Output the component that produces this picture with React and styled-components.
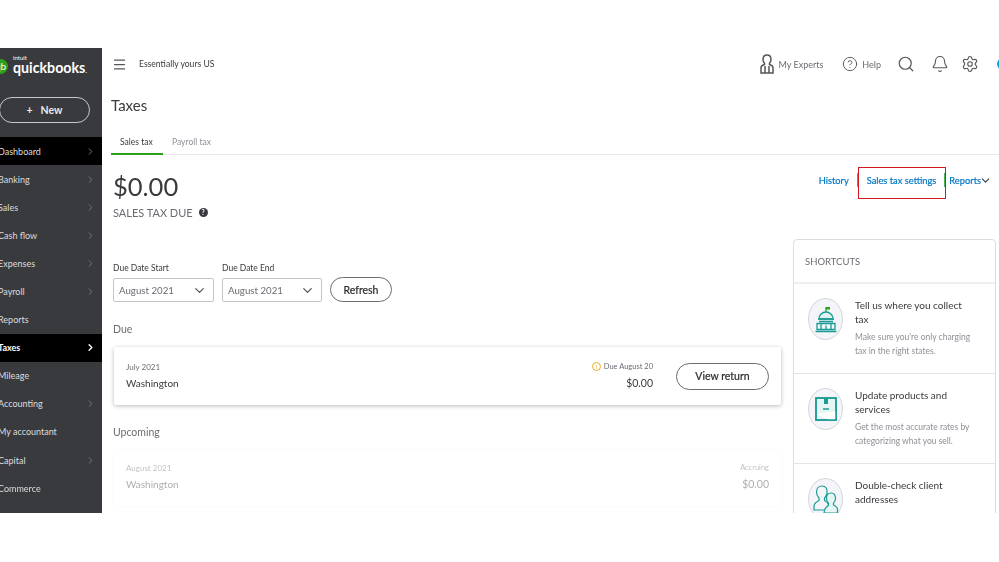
import React from 'react';
import styled, { createGlobalStyle } from 'styled-components';
import { Menu, CircleHelp, Search, Bell, Settings, ChevronDown, ChevronRight } from 'lucide-react';

const navItems = [
  { label: 'Dashboard', arrow: true, tone: 'black' },
  { label: 'Banking', arrow: true },
  { label: 'Sales', arrow: true },
  { label: 'Cash flow', arrow: true },
  { label: 'Expenses', arrow: true },
  { label: 'Payroll', arrow: true },
  { label: 'Reports' },
  { label: 'Taxes', arrow: true, tone: 'active' },
  { label: 'Mileage' },
  { label: 'Accounting', arrow: true },
  { label: 'My accountant' },
  { label: 'Capital', arrow: true },
  { label: 'Commerce' },
];

const CapitolIcon = () => (
  <svg width="24" height="28" viewBox="0 0 24 28" fill="none" stroke="#1a9b94" strokeWidth="1.3">
    <path d="M12 7V2" stroke="#2ca01c" />
    <path d="M12 2h4v2.5h-4z" fill="#2ca01c" stroke="none" />
    <path d="M5 14a7 7 0 0 1 14 0z" fill="#dff3f1" />
    <path d="M4 14h16M5 16.5h14M3 18.5h18v6H3zM1.5 26.5h21" />
    <path d="M7 18.5v6M17 18.5v6M12 20.5v4" />
  </svg>
);

const BoxIcon = () => (
  <svg width="24" height="28" viewBox="0 0 24 28" fill="none" stroke="#1a9b94" strokeWidth="1.5">
    <rect x="2" y="3" width="20" height="22" fill="#e4f5f3" />
    <path d="M2 19l13 6h7v-9z" fill="#fff" stroke="none" />
    <rect x="2" y="3" width="20" height="22" />
    <path d="M10 3h4v6h-4z" fill="#1a9b94" stroke="none" />
    <path d="M9 14h6" />
  </svg>
);

const PeopleIcon = () => (
  <svg width="28" height="30" viewBox="0 0 28 30" fill="none" stroke="#1a9b94" strokeWidth="1.2">
    <path d="M10 2c4 0 5.500 3 5 7-.3 2.500-1.500 4-2.500 5v2.500c2 1 3.500 2 4 4.500v5H2v-4c0-3 3-4.500 5-5.500V14C5.500 12.500 4.500 10.500 4.500 8 4.500 4.500 6.500 2 10 2z" />
    <path d="M19 9c3 0 4.500 2.500 4.500 5.500 0 2-.8 3.500-2 4.500v2c2 .8 4 2 4 4.500V29H12c0-2 .3-4 2-5.500l2.500-2V19c-1.200-1-2-2.500-2-4.500C14.500 11.500 16 9 19 9z" fill="#e4f5f3" />
  </svg>
);

const ExpertIcon = () => (
  <svg width="14" height="20" viewBox="0 0 14 20" fill="none" stroke="#54565a" strokeWidth="1.5">
    <path d="M7 1c2.800 0 4 2 4 4.500 0 1.500-.6 2.800-1.500 3.700v1.300c2 .5 3.500 1.500 3.500 3.500V19H1v-5c0-2 1.500-3 3.500-3.500V9.200C3.600 8.300 3 7 3 5.500 3 3 4.200 1 7 1z" />
    <path d="M5 12v7M9 12v7" />
  </svg>
);

const App = () => {
  return (
    <>
      <GlobalStyle />
      <Frame>
        <Sidebar>
          <Logo>
            <LogoBadge>qb</LogoBadge>
            <LogoWords>
              <LogoIntuit>intuit</LogoIntuit>
              <LogoName>quickbooks<LogoDot>.</LogoDot></LogoName>
            </LogoWords>
          </Logo>
          <NewButton><span>+</span>New</NewButton>
          <NavList>
            {navItems.map((item) => (
              <NavRow key={item.label} $tone={item.tone}>
                {item.label}
                {item.arrow && <ChevronRight size={11} strokeWidth={item.tone === 'active' ? 3 : 2} />}
              </NavRow>
            ))}
          </NavList>
        </Sidebar>

        <Main>
          <TopBar>
            <MenuIcon size={15} color="#54565a" strokeWidth={2} />
            <CompanyName>Essentially yours US</CompanyName>
            <TopActions>
              <TopLink $after={5}><ExpertIcon />My Experts</TopLink>
              <TopLink $after={2}><CircleHelp size={16} strokeWidth={1.4} />Help</TopLink>
              <Search size={18} color="#54565a" strokeWidth={1.6} />
              <BellIcon size={18} color="#54565a" strokeWidth={1.5} />
              <Settings size={18} color="#54565a" strokeWidth={1.5} />
              <ProfileDot />
            </TopActions>
          </TopBar>

          <PageTitle>Taxes</PageTitle>

          <Tabs>
            <Tab $active>Sales tax</Tab>
            <Tab>Payroll tax</Tab>
          </Tabs>

          <Columns>
            <LeftColumn>
              <Amount>$0.00</Amount>
              <AmountLabel>SALES TAX DUE <InfoDot>?</InfoDot></AmountLabel>

              <Filters>
                <Field>
                  <FieldLabel>Due Date Start</FieldLabel>
                  <SelectBox $width={101}>August 2021<ChevronDown size={15} color="#54565a" /></SelectBox>
                </Field>
                <Field>
                  <FieldLabel>Due Date End</FieldLabel>
                  <SelectBox $width={100}>August 2021<ChevronDown size={15} color="#54565a" /></SelectBox>
                </Field>
                <OutlineButton $width={62} $height={25}>Refresh</OutlineButton>
              </Filters>

              <SectionTitle $top={20}>Due</SectionTitle>
              <TaxCard>
                <CardLeft>
                  <CardPeriod>July 2021</CardPeriod>
                  <CardState>Washington</CardState>
                </CardLeft>
                <CardRight>
                  <CardStatus>
                    <WarnDot>!</WarnDot>Due August 20
                  </CardStatus>
                  <CardAmount>$0.00</CardAmount>
                </CardRight>
                <OutlineButton $width={93} $height={27}>View return</OutlineButton>
              </TaxCard>

              <SectionTitle $top={20}>Upcoming</SectionTitle>
              <TaxCard $muted>
                <CardLeft>
                  <CardPeriod>August 2021</CardPeriod>
                  <CardState>Washington</CardState>
                </CardLeft>
                <CardRight>
                  <CardStatus>Accruing</CardStatus>
                  <CardAmount>$0.00</CardAmount>
                </CardRight>
              </TaxCard>
            </LeftColumn>

            <RightColumn>
              <LinkBar>
                <HeadLink $bar $after={9}>History</HeadLink>
                <HeadLink $bar $after={4}>Sales tax settings</HeadLink>
                <HeadLink>Reports<ReportsChevron size={13} color="#393a3d" strokeWidth={2} /></HeadLink>
                <RedBox />
              </LinkBar>

              <Shortcuts>
                <ShortcutsHead>SHORTCUTS</ShortcutsHead>
                <ShortcutRow>
                  <IconCircle><CapitolIcon /></IconCircle>
                  <ShortcutText>
                    <ShortcutTitle>Tell us where you collect tax</ShortcutTitle>
                    <ShortcutBody>Make sure you're only charging tax in the right states.</ShortcutBody>
                  </ShortcutText>
                </ShortcutRow>
                <ShortcutRow>
                  <IconCircle><BoxIcon /></IconCircle>
                  <ShortcutText>
                    <ShortcutTitle>Update products and services</ShortcutTitle>
                    <ShortcutBody>Get the most accurate rates by categorizing what you sell.</ShortcutBody>
                  </ShortcutText>
                </ShortcutRow>
                <ShortcutRow>
                  <IconCircle><PeopleIcon /></IconCircle>
                  <ShortcutText>
                    <ShortcutTitle>Double-check client addresses</ShortcutTitle>
                    <ShortcutBody>Make sure addresses are complete.</ShortcutBody>
                  </ShortcutText>
                </ShortcutRow>
              </Shortcuts>
            </RightColumn>
          </Columns>
        </Main>
      </Frame>
    </>
  );
};

export default App;

const GlobalStyle = createGlobalStyle`
  html, body {
    margin: 0;
    background: #fff;
    overflow: hidden;
  }
  * {
    box-sizing: border-box;
  }
  body {
    font-family: "Lato", "Open Sans", sans-serif;
    color: #393a3d;
  }
`;

const Frame = styled.div`
  display: flex;
  width: 999px;
  height: 465px;
  margin-top: 48px;
  overflow: hidden;
  filter: blur(0.5px);
`;

const Sidebar = styled.div`
  flex: 0 0 102px;
  background: #393a3d;
  color: #e4e4e6;
`;

const Logo = styled.div`
  display: flex;
  align-items: center;
  height: 37px;
  margin-left: -7px;
  gap: 5px;
`;

const LogoBadge = styled.div`
  flex: 0 0 15px;
  width: 15px;
  height: 15px;
  border-radius: 50%;
  background: #2ca01c;
  color: #fff;
  font-size: 10px;
  line-height: 14px;
  text-align: center;
`;

const LogoWords = styled.div`
  display: flex;
  flex-direction: column;
  line-height: 1;
`;

const LogoIntuit = styled.span`
  font-size: 6px;
  line-height: 5px;
  color: #fff;
`;

const LogoName = styled.span`
  font-size: 14.2px;
  font-weight: 700;
  line-height: 15px;
  color: #fff;
`;

const LogoDot = styled.span`
  font-size: 8px;
  font-weight: 400;
`;

const NewButton = styled.div`
  display: flex;
  justify-content: center;
  gap: 8px;
  align-items: center;
  width: 91px;
  height: 26px;
  margin: 12px 0 0 -1px;
  border: 1px solid #c8c8cb;
  border-radius: 13px;
  font-size: 10.5px;
  font-weight: 700;
  color: #e9e9eb;
`;

const NavList = styled.div`
  margin-top: 14px;
`;

const NavRow = styled.div`
  display: flex;
  align-items: center;
  justify-content: space-between;
  height: 28.1px;
  padding-right: 6px;
  text-indent: -2px;
  font-size: 9px;
  font-weight: ${(p) => (p.$tone === 'active' ? 700 : 400)};
  color: ${(p) => (p.$tone === 'active' ? '#fff' : '#dcdcde')};
  background: ${(p) => (p.$tone ? '#000' : 'transparent')};

  svg {
    color: ${(p) => (p.$tone === 'active' ? '#fff' : '#77787b')};
  }
`;

const Main = styled.div`
  flex: 1;
  min-width: 0;
  padding-left: 9px;
`;

const TopBar = styled.div`
  display: flex;
  align-items: center;
  height: 32px;
  padding-left: 1px;
`;

const MenuIcon = styled(Menu)`
  flex: none;
`;

const BellIcon = styled(Bell)`
  margin: 0 -2px 0 2px;
`;

const CompanyName = styled.div`
  margin-left: 12px;
  font-size: 8.6px;
  color: #393a3d;
`;

const TopActions = styled.div`
  display: flex;
  align-items: center;
  gap: 14px;
  margin-left: auto;
  margin-right: -4px;
`;

const TopLink = styled.div`
  display: flex;
  align-items: center;
  gap: 4px;
  margin-right: ${(p) => p.$after}px;
  font-size: 9px;
  color: #6b6c72;

  svg {
    color: #54565a;
  }
`;

const ProfileDot = styled.div`
  width: 6px;
  height: 12px;
  margin-left: 4px;
  border-radius: 6px 0 0 6px;
  background: #0a9fd8;
`;

const PageTitle = styled.h1`
  margin: 16px 0 0;
  font-size: 15px;
  font-weight: 400;
  line-height: 18px;
  color: #393a3d;
`;

const Tabs = styled.div`
  display: flex;
  margin-top: 21px;
  height: 20px;
  border-bottom: 1px solid #e9e9eb;
`;

const Tab = styled.div`
  height: 20px;
  width: ${(p) => (p.$active ? '52px' : 'auto')};
  margin-left: ${(p) => (p.$active ? '0' : '9px')};
  padding: 1px 0 0 ${(p) => (p.$active ? '9px' : '0')};
  border-bottom: 2px solid ${(p) => (p.$active ? '#2ca01c' : 'transparent')};
  font-size: 8.5px;
  line-height: 12px;
  color: ${(p) => (p.$active ? '#393a3d' : '#8d9096')};
`;

const Columns = styled.div`
  display: flex;
`;

const LeftColumn = styled.div`
  flex: 0 0 670px;
  padding-left: 2px;
`;

const Amount = styled.div`
  margin-top: 13px;
  font-size: 25.5px;
  line-height: 36px;
  color: #393a3d;
`;

const AmountLabel = styled.div`
  display: flex;
  align-items: center;
  gap: 6px;
  height: 16px;
  font-size: 11px;
  color: #6b6c72;
`;

const InfoDot = styled.span`
  width: 9px;
  height: 9px;
  border-radius: 50%;
  background: #393a3d;
  color: #fff;
  font-size: 7px;
  font-weight: 700;
  line-height: 9px;
  text-align: center;
`;

const Filters = styled.div`
  display: flex;
  align-items: flex-end;
  gap: 8px;
  margin-top: 43px;
`;

const Field = styled.div`
  display: flex;
  flex-direction: column;
`;

const FieldLabel = styled.label`
  height: 15px;
  font-size: 8.5px;
  line-height: 11px;
  color: #393a3d;
`;

const SelectBox = styled.div`
  display: flex;
  align-items: center;
  justify-content: space-between;
  width: ${(p) => p.$width}px;
  height: 24px;
  padding: 0 6px 0 5px;
  border: 1px solid #c4c5c9;
  border-radius: 2px;
  font-size: 9.7px;
  color: #6b6c72;
`;

const OutlineButton = styled.div`
  display: flex;
  align-items: center;
  justify-content: center;
  flex: none;
  width: ${(p) => p.$width}px;
  height: ${(p) => p.$height}px;
  margin-left: ${(p) => (p.$width > 90 ? '23px' : '0')};
  border: 1px solid #6b6c72;
  border-radius: ${(p) => p.$height / 2}px;
  font-size: 10.5px;
  color: #2b2b2e;
  -webkit-text-stroke: 0.2px #2b2b2e;
`;

const SectionTitle = styled.div`
  margin-top: ${(p) => p.$top}px;
  height: 15px;
  font-size: 10.5px;
  line-height: 15px;
  color: #6b6c72;
`;

const TaxCard = styled.div`
  display: flex;
  align-items: center;
  width: 667px;
  height: ${(p) => (p.$muted ? '57px' : '58px')};
  margin: ${(p) => (p.$muted ? '9px' : '10px')} 0 0 1px;
  padding: 0 12px;
  border-radius: 2px;
  background: #fff;
  box-shadow: ${(p) => (p.$muted ? '0 0 3px rgba(0, 0, 0, 0.1)' : '0 1px 4px rgba(0, 0, 0, 0.28)')};
  opacity: ${(p) => (p.$muted ? 0.42 : 1)};
`;

const CardLeft = styled.div`
  flex: 1;
  margin-bottom: 2px;
`;

const CardPeriod = styled.div`
  font-size: 8px;
  line-height: 12px;
  color: #6b6c72;
`;

const CardState = styled.div`
  margin-top: 3px;
  font-size: 10px;
  line-height: 14px;
  color: #393a3d;
`;

const CardRight = styled.div`
  display: flex;
  flex-direction: column;
  align-items: flex-end;
  margin-bottom: 2px;
`;

const CardStatus = styled.div`
  display: flex;
  align-items: center;
  gap: 3px;
  font-size: 7.5px;
  line-height: 12px;
  color: #6b6c72;
`;

const WarnDot = styled.span`
  width: 9px;
  height: 9px;
  border: 1px solid #f4a91f;
  border-radius: 50%;
  color: #f4a91f;
  font-size: 6px;
  line-height: 7px;
  text-align: center;
`;

const CardAmount = styled.div`
  margin-top: 3px;
  font-size: 10.5px;
  line-height: 14px;
`;

const RightColumn = styled.div`
  flex: 1;
  min-width: 0;
`;

const LinkBar = styled.div`
  position: relative;
  display: flex;
  justify-content: flex-end;
  align-items: center;
  height: 50px;
  margin-right: 7px;
`;

const HeadLink = styled.div`
  display: flex;
  align-items: center;
  height: 14px;
  padding-right: ${(p) => (p.$bar ? '8px' : '0')};
  margin-right: ${(p) => p.$after ?? 0}px;
  border-right: ${(p) => (p.$bar ? '1px solid #4caf50' : 'none')};
  font-size: 9.3px;
  color: #0077c5;
  -webkit-text-stroke: 0.2px #0077c5;
  white-space: nowrap;
`;

const ReportsChevron = styled(ChevronDown)`
  margin-left: -2px;
`;

const RedBox = styled.div`
  position: absolute;
  top: 12px;
  right: 46px;
  width: 88px;
  height: 32px;
  border: 1px solid #d0181f;
`;

const Shortcuts = styled.div`
  width: 203px;
  margin: 34px 0 0 12px;
  border: 1px solid #dcdde0;
  border-radius: 4px;
  background: #fff;
`;

const ShortcutsHead = styled.div`
  height: 44px;
  padding-left: 11px;
  font-size: 9.5px;
  line-height: 44px;
  color: #6b6c72;
  border-bottom: 2px solid #eeeff1;
`;

const ShortcutRow = styled.div`
  display: flex;
  gap: 12px;
  height: 90px;
  padding: 13px 10px 0 14px;
  border-bottom: 1px solid #e3e4e7;
`;

const IconCircle = styled.div`
  display: flex;
  align-items: center;
  justify-content: center;
  flex: 0 0 35px;
  height: 42px;
  margin-top: 1px;
  border: 1px solid #d4d7dc;
  border-radius: 50%;
  background: #f4f5f8;
`;

const ShortcutText = styled.div`
  flex: 1;
  min-width: 0;
  margin-top: 1px;
`;

const ShortcutTitle = styled.div`
  max-width: 115px;
  font-size: 10px;
  line-height: 14px;
  color: #393a3d;
`;

const ShortcutBody = styled.div`
  max-width: 120px;
  margin-top: 4px;
  font-size: 8.5px;
  line-height: 14px;
  color: #8d9096;
`;
